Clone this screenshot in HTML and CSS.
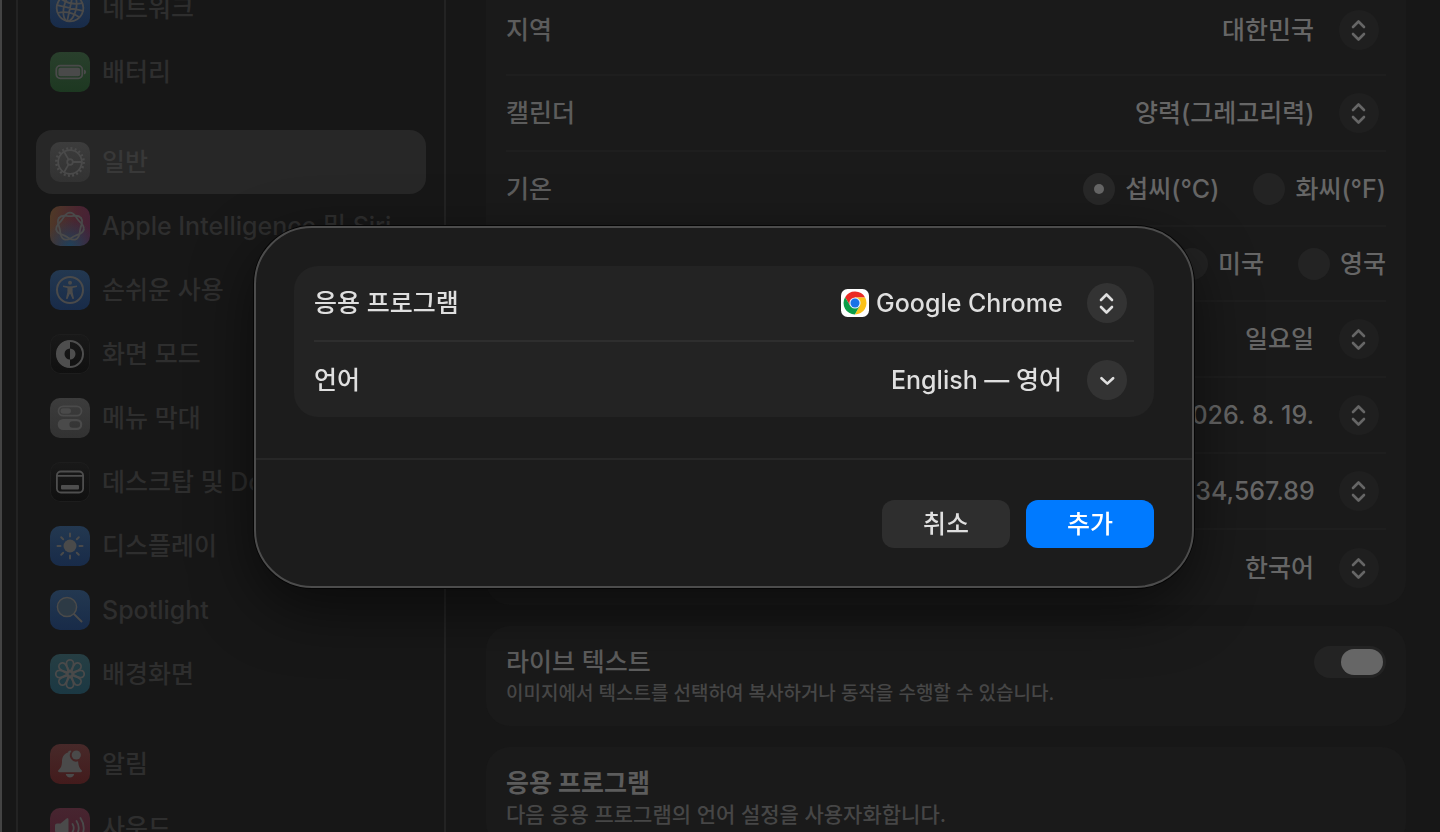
FILE: index.html
```html
<!DOCTYPE html>
<html lang="ko">
	<head>
		<meta charset="UTF-8">
		<meta name="viewport" content="width=device-width, initial-scale=1">
		<title>일반</title>
		<link rel="stylesheet" href="styles.css">
	</head>
	<body>
		<svg class="defs" aria-hidden="true">
			<symbol id="updown" viewBox="0 0 40 40">
				<path d="M14 17l5.5-5.5L25 17M14 24l5.5 5.5L25 24"/>
			</symbol>
			<symbol id="down" viewBox="0 0 40 40">
				<path d="M14.5 18.2l5.8 5.4 5.8-5.4"/>
			</symbol>
		</svg>

		<div class="window">
			<nav class="sidebar">
				<ul class="group">
					<li><a class="item" href="#network">
						<svg class="icon blue" viewBox="0 0 40 40">
							<g class="line" transform="rotate(12 20 20)">
								<circle cx="20" cy="20" r="13.3"/>
								<ellipse cx="20" cy="20" rx="6.2" ry="13.3"/>
								<path d="M20 6.7v26.6M6.7 20h26.6M9 12.8q11 5 22 0M9 27.2q11-5 22 0"/>
							</g>
						</svg>
						<span>네트워크</span>
					</a></li>
					<li><a class="item" href="#battery">
						<svg class="icon green" viewBox="0 0 40 40">
							<rect class="line" x="6.3" y="13.7" width="26" height="12.6" rx="4"/>
							<rect class="solid" x="8.4" y="15.8" width="21.8" height="8.4" rx="2"/>
							<path class="solid" d="M34 17.5q2.2.8 2.2 2.5T34 22.5z"/>
						</svg>
						<span>배터리</span>
					</a></li>
				</ul>
				<ul class="group">
					<li><a class="item current" href="#general">
						<svg class="icon gray" viewBox="0 0 40 40">
							<circle class="teeth" cx="20" cy="20" r="13.6"/>
							<circle class="line" cx="20" cy="20" r="11.8"/>
							<circle class="line" cx="20" cy="20" r="2.8"/>
							<path class="line" d="M22.8 20h9M18.6 17.6l-4.5-7.8M18.6 22.4l-4.5 7.8"/>
						</svg>
						<span>일반</span>
					</a></li>
					<li><a class="item" href="#siri">
						<svg class="icon rainbow" viewBox="0 0 40 40">
							<g class="line" transform="translate(20 20.6)">
								<path id="lobe" d="M0-14C4.5-14 5.1-10.5 8.2-6.6C11.3-2.7 14.7-1.3 13.65 3.1"/>
								<use href="#lobe" transform="rotate(51.43)"/>
								<use href="#lobe" transform="rotate(102.86)"/>
								<use href="#lobe" transform="rotate(154.29)"/>
								<use href="#lobe" transform="rotate(205.71)"/>
								<use href="#lobe" transform="rotate(257.14)"/>
								<use href="#lobe" transform="rotate(308.57)"/>
							</g>
						</svg>
						<span>Apple Intelligence 및 Siri</span>
					</a></li>
					<li><a class="item" href="#accessibility">
						<svg class="icon blue" viewBox="0 0 40 40">
							<circle class="line thick" cx="20" cy="20" r="13"/>
							<circle class="solid" cx="20" cy="12.8" r="2"/>
							<path class="solid" d="M13 15.6l5 .6h4l5-.6v1.3L22.6 18v4l1.5 6.8-1.6.3L20.3 24h-.6l-2.2 5.1-1.6-.3 1.5-6.8v-4L13 16.9z"/>
						</svg>
						<span>손쉬운 사용</span>
					</a></li>
					<li><a class="item" href="#appearance">
						<svg class="icon black" viewBox="0 0 40 40">
							<circle class="line thick" cx="20" cy="20" r="13"/>
							<path class="solid" d="M20 6.5a13.5 13.5 0 0 0 0 27v-8a5.5 5.5 0 0 1 0-11zM20 14.5a5.5 5.5 0 0 1 0 11z"/>
						</svg>
						<span>화면 모드</span>
					</a></li>
					<li><a class="item" href="#menubar">
						<svg class="icon gray" viewBox="0 0 40 40">
							<rect class="line" x="8.5" y="8.3" width="23" height="9.4" rx="4.7"/>
							<rect class="solid" x="10.5" y="10.3" width="10.5" height="5.5" rx="2.7"/>
							<path class="solid" fill-rule="evenodd" d="M13.2 21h13.6a5.5 5.5 0 0 1 0 11H13.2a5.5 5.5 0 0 1 0-11zM22.7 23.2a3.3 3.3 0 0 0 0 6.6h4.1a3.3 3.3 0 0 0 0-6.6z"/>
						</svg>
						<span>메뉴 막대</span>
					</a></li>
					<li><a class="item" href="#dock">
						<svg class="icon black" viewBox="0 0 40 40">
							<rect class="line" x="6.9" y="9.5" width="26.2" height="21" rx="4"/>
							<path class="line" d="M7 13.8h26"/>
							<rect class="solid" x="11" y="23" width="18" height="4.5" rx="1"/>
						</svg>
						<span>데스크탑 및 Dock</span>
					</a></li>
					<li><a class="item" href="#display">
						<svg class="icon blue" viewBox="0 0 40 40">
							<circle class="solid" cx="20" cy="20" r="6.5"/>
							<path class="line thick" d="M20 7.5v3M20 29.5v3M7.5 20h3M29.5 20h3M11.2 11.2l2 2M26.8 26.8l2 2M11.2 28.8l2-2M26.8 13.2l2-2"/>
						</svg>
						<span>디스플레이</span>
					</a></li>
					<li><a class="item" href="#spotlight">
						<svg class="icon blue" viewBox="0 0 40 40">
							<circle class="lens" cx="17" cy="17" r="9.6"/>
							<path class="line thick" d="M24 24l7.5 7.5"/>
						</svg>
						<span>Spotlight</span>
					</a></li>
					<li><a class="item" href="#wallpaper">
						<svg class="icon teal" viewBox="0 0 40 40">
							<g class="line" transform="translate(20 20)">
								<path id="petal" d="M0-2C-1.5-5-3.8-7.5-3.6-10.6a3.6 3.6 0 0 1 7.2 0C3.8-7.5 1.5-5 0-2z"/>
								<use href="#petal" transform="rotate(45)"/>
								<use href="#petal" transform="rotate(90)"/>
								<use href="#petal" transform="rotate(135)"/>
								<use href="#petal" transform="rotate(180)"/>
								<use href="#petal" transform="rotate(225)"/>
								<use href="#petal" transform="rotate(270)"/>
								<use href="#petal" transform="rotate(315)"/>
							</g>
						</svg>
						<span>배경화면</span>
					</a></li>
				</ul>
				<ul class="group">
					<li><a class="item" href="#notifications">
						<svg class="icon red" viewBox="0 0 40 40">
							<path class="solid" d="M20.5 6.5c-1.5 0-2.3.9-2.5 2-4 1.2-6 4.5-6 8.5 0 5-1.3 7-3.4 8.9-1 1-.6 2.3.7 2.3h21.4c1.3 0 1.7-1.3.7-2.3-2-2-3-4-3.3-8.6a6.3 6.3 0 0 1-6.6-10.2zM15.8 30h8.4a4.3 4.3 0 0 1-8.4 0z"/>
							<circle class="solid" cx="26.3" cy="11" r="4.6"/>
						</svg>
						<span>알림</span>
					</a></li>
					<li><a class="item" href="#sound">
						<svg class="icon pink" viewBox="0 0 40 40">
							<path class="solid" d="M5 17.5q0-2 2-2h3.5l6-5q2-1.5 2 1v17q0 2.5-2 1l-6-5H7q-2 0-2-2z"/>
							<path class="line" d="M22.5 16q2.5 4 0 8M26.5 13q4.500 7 0 14M30.5 10q6.500 10 0 20"/>
						</svg>
						<span>사운드</span>
					</a></li>
				</ul>
			</nav>

			<main class="content">
				<section class="card region">
					<div class="row">
						<label for="area">지역</label>
						<div class="popup">
							<select id="area"><option>대한민국</option></select>
							<svg class="knob"><use href="#updown"/></svg>
						</div>
					</div>
					<div class="row">
						<label for="calendar">캘린더</label>
						<div class="popup">
							<select id="calendar"><option>양력(그레고리력)</option></select>
							<svg class="knob"><use href="#updown"/></svg>
						</div>
					</div>
					<div class="row short" role="radiogroup" aria-labelledby="temp">
						<span id="temp">기온</span>
						<div class="radios">
							<label><input type="radio" name="temp" checked>섭씨(°C)</label>
							<label><input type="radio" name="temp">화씨(°F)</label>
						</div>
					</div>
					<div class="row short" role="radiogroup" aria-labelledby="unit">
						<span id="unit">측정 단위</span>
						<div class="radios">
							<label><input type="radio" name="unit" checked>미터법</label>
							<label><input type="radio" name="unit">미국</label>
							<label><input type="radio" name="unit">영국</label>
						</div>
					</div>
					<div class="row">
						<label for="week">주의 시작 요일</label>
						<div class="popup">
							<select id="week"><option>일요일</option></select>
							<svg class="knob"><use href="#updown"/></svg>
						</div>
					</div>
					<div class="row">
						<label for="date">날짜 포맷</label>
						<div class="popup">
							<select id="date"><option>2026. 8. 19.</option></select>
							<svg class="knob"><use href="#updown"/></svg>
						</div>
					</div>
					<div class="row">
						<label for="number">숫자 포맷</label>
						<div class="popup">
							<select id="number"><option>1,234,567.89</option></select>
							<svg class="knob"><use href="#updown"/></svg>
						</div>
					</div>
					<div class="row">
						<label for="sort">목록 정렬 순서</label>
						<div class="popup">
							<select id="sort"><option>한국어</option></select>
							<svg class="knob"><use href="#updown"/></svg>
						</div>
					</div>
				</section>

				<section class="card note">
					<div>
						<label for="livetext">라이브 텍스트</label>
						<p>이미지에서 텍스트를 선택하여 복사하거나 동작을 수행할 수 있습니다.</p>
					</div>
					<input class="switch" id="livetext" type="checkbox" role="switch" checked>
				</section>

				<section class="card note">
					<div>
						<h2>응용 프로그램</h2>
						<p class="lead">다음 응용 프로그램의 언어 설정을 사용자화합니다.</p>
					</div>
				</section>
			</main>
		</div>

		<div class="overlay">
			<form class="sheet" role="dialog" aria-modal="true">
				<div class="fields">
					<div class="row">
						<label for="app">응용 프로그램</label>
						<div class="popup">
							<svg class="chrome" viewBox="0 0 28 28">
								<rect width="28" height="28" rx="6.5" fill="#fff"/>
								<path fill="#ea2a24" d="M14 8.5h10.1a11.5 11.5 0 0 0-20-.2L9.2 16.8z"/>
								<path fill="#fbc116" d="M18.8 16.75L13.9 25.5A11.5 11.5 0 0 0 24.1 8.5H14z"/>
								<path fill="#0c9d48" d="M9.2 16.75L4.1 8.25A11.5 11.5 0 0 0 13.8 25.5l5-8.75z"/>
								<circle cx="14" cy="14" r="5.6" fill="#e8f0fe"/>
								<circle cx="14" cy="14" r="4.5" fill="#1a73e8"/>
							</svg>
							<select id="app"><option>Google Chrome</option></select>
							<svg class="knob"><use href="#updown"/></svg>
						</div>
					</div>
					<div class="row">
						<label for="lang">언어</label>
						<div class="popup">
							<select id="lang"><option>English — 영어</option></select>
							<svg class="knob"><use href="#down"/></svg>
						</div>
					</div>
				</div>
				<div class="actions">
					<button type="button">취소</button>
					<button type="submit" class="primary">추가</button>
				</div>
			</form>
		</div>
	</body>
</html>
```

FILE: styles.css
```css
*{
	box-sizing: border-box;
}
body{
	margin: 0;
	height: 100vh;
	overflow: hidden;
	background: #171717;
	color: #5c5c5c;
	font: 500 25px/32px Inter, "Noto Sans CJK KR", sans-serif;
}
ul, p, h2{
	margin: 0;
	padding: 0;
	list-style: none;
}
.defs{
	display: none;
}
.window{
	display: flex;
	height: 100%;
	padding-left: 14px;
	border-left: 2px solid #444;
}

/* sidebar */
.sidebar{
	flex: none;
	width: 430px;
	padding: 0 18px;
	border: solid #232323;
	border-width: 0 2px;
	overflow: hidden;
}
.group{
	margin-bottom: 26px;
}
/* the list is scrolled a little */
.group:first-child{
	margin-top: -24px;
}
.item{
	display: flex;
	align-items: center;
	gap: 12px;
	height: 64px;
	padding: 0 14px;
	border-radius: 16px;
	color: #2e2e2e;
	text-decoration: none;
	white-space: nowrap;
}
.current{
	background: #272727;
	color: #383838;
}
.icon{
	flex: none;
	width: 40px;
	height: 40px;
	border-radius: 10px;
}
.blue{
	background: linear-gradient(#233850, #182b49);
}
.green{
	background: linear-gradient(#293f2c, #1d3821);
}
.gray{
	background: linear-gradient(#3c3c3c, #323232);
}
.black{
	background: linear-gradient(#191919, #101010);
	box-shadow: inset 0 0 0 1px #1d1d1d;
}
.teal{
	background: linear-gradient(#263e43, #1b3843);
}
.red{
	background: linear-gradient(#472929, #431b1c);
}
.pink{
	background: linear-gradient(#472530, #431b28);
}
.rainbow{
	background: radial-gradient(circle at 50% 100%, #20415a, transparent 60%), linear-gradient(100deg, #4f3a26, #4a2530 60%, #452037);
}
.line{
	fill: none;
	stroke: #4a4a4a;
	stroke-width: 1.8;
	stroke-linecap: round;
	stroke-linejoin: round;
}
.thick{
	stroke-width: 2;
}
.solid{
	fill: #4a4a4a;
}
.black .line{
	stroke: #4e4e4e;
}
.black .solid{
	fill: #4e4e4e;
}
.teeth{
	fill: none;
	stroke: #4a4a4a;
	stroke-width: 2.6;
	stroke-dasharray: 2 2.272;
}
.lens{
	fill: #2d3a45;
	stroke: #4a4a4a;
	stroke-width: 1.5;
}

/* content */
.content{
	flex: 1;
	padding: 0 34px 0 40px;
}
.card{
	margin-bottom: 21px;
	padding: 0 20px;
	border-radius: 24px;
	background: #1a1a1a;
}
.region{
	border-radius: 0 0 24px 24px;
}
.row{
	display: flex;
	align-items: center;
	justify-content: space-between;
	height: 76px;
	border-bottom: 2px solid #1e1e1e;
}
.short, .row:last-child{
	height: 75px;
}
.row:last-child{
	border-bottom: 0;
}
.region .row:first-child{
	padding-bottom: 14px;
}
.popup{
	position: relative;
	display: flex;
	align-items: center;
	gap: 7px;
}
select{
	appearance: none;
	height: 40px;
	padding: 0 71px 0 0;
	border: 0;
	background: none;
	color: #666;
	font: inherit;
}
.knob{
	position: absolute;
	right: 7px;
	width: 40px;
	height: 40px;
	border-radius: 50%;
	background: #1f1f1f;
	fill: none;
	stroke: #666;
	stroke-width: 2.6;
	stroke-linecap: round;
	stroke-linejoin: round;
	pointer-events: none;
}
.radios{
	display: flex;
	gap: 34px;
	color: #666;
}
.radios label{
	display: flex;
	align-items: center;
	gap: 10px;
}
input{
	appearance: none;
	margin: 0;
	background: #232323;
}
input[type=radio]{
	display: grid;
	place-items: center;
	width: 32px;
	height: 32px;
	border-radius: 50%;
}
input[type=radio]:checked{
	background: #282828;
}
input[type=radio]:checked::before{
	content: "";
	width: 10px;
	height: 10px;
	border-radius: 50%;
	background: #666;
}
.note{
	display: flex;
	align-items: flex-start;
	justify-content: space-between;
	height: 100px;
	padding-top: 20px;
}
.note p{
	color: #464646;
	font-size: 19px;
}
.note .lead{
	font-size: 21px;
}
h2{
	font-size: 25px;
	font-weight: 700;
}
.switch{
	display: flex;
	justify-content: flex-end;
	width: 72px;
	height: 32px;
	padding: 3px;
	border-radius: 16px;
}
.switch::before{
	content: "";
	width: 42px;
	border-radius: 13px;
	background: #666;
}

/* sheet */
.overlay{
	position: fixed;
	inset: 0;
	display: grid;
	place-items: center;
	padding: 0 0 18px 8px;
}
.sheet{
	width: 940px;
	max-width: 100%;
	border: 2px solid #4c4c4c;
	border-radius: 58px;
	background: #1c1c1c;
	box-shadow: 0 0 0 1px #050505, 0 20px 60px rgba(0,0,0,.55);
	color: #dfdfdf;
}
.fields{
	margin: 38px 38px 41px;
	padding: 0 20px;
	border-radius: 24px;
	background: #232323;
}
.fields .row{
	border-color: #2e2e2e;
}
.sheet select{
	color: #dfdfdf;
}
.sheet .knob{
	background: #333;
	stroke: #dfdfdf;
}
.chrome{
	width: 28px;
	height: 28px;
}
.actions{
	display: flex;
	justify-content: flex-end;
	gap: 16px;
	padding: 40px 38px 38px;
	border-top: 2px solid #272727;
}
button{
	width: 128px;
	height: 48px;
	padding: 0;
	border: 0;
	border-radius: 12px;
	background: #2e2e2e;
	color: #dfdfdf;
	font: inherit;
}
.primary{
	background: #007aff;
	color: #fff;
}
```
